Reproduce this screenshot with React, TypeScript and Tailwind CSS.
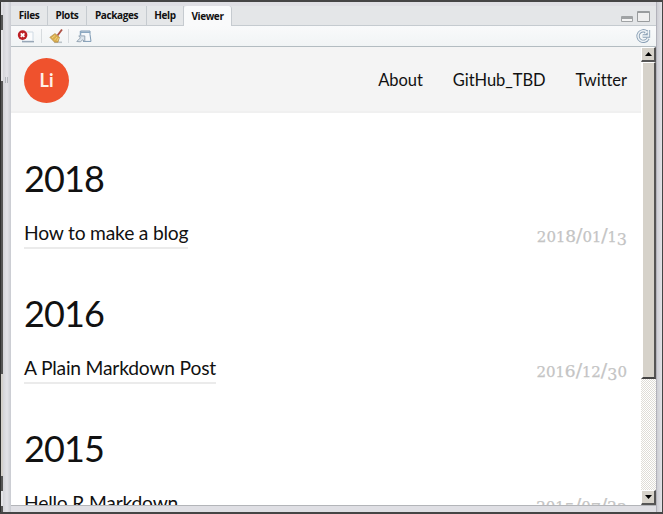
import React from "react";

const tabs = [
  { label: "Files", width: "w-[37px]" },
  { label: "Plots", width: "w-[39px]" },
  { label: "Packages", width: "w-[60px]" },
  { label: "Help", width: "w-[37px]" },
  { label: "Viewer", width: "w-[48px]" },
];

const posts = [
  { year: "2018", title: "How to make a blog", date: "2018/01/13" },
  { year: "2016", title: "A Plain Markdown Post", date: "2016/12/30" },
  { year: "2015", title: "Hello R Markdown", date: "2015/07/23" },
];

/* Old-style figures: 0-2 sit at x-height, 3/4/5/7/9 descend, 6/8 ascend. */
function figureClass(c: string) {
  if (c === "/") return "text-[19px]";
  if (c === "1") return "text-[14.5px]";
  if ("02".includes(c)) return "text-[15px]";
  if ("68".includes(c)) return "text-[17px]";
  return "relative top-[3px] text-[16px]";
}

function PostDate({ value }: { value: string }) {
  return (
    <time className="block h-[24px] whitespace-nowrap font-['DejaVu_Serif',serif] leading-[24px] text-[#c4c4c4] [-webkit-text-stroke:0.25px_#c4c4c4]">
      {value.split("").map((c, i) => (
        <span key={i} className={figureClass(c)}>{c}</span>
      ))}
    </time>
  );
}

function ScrollButton({ up = false }: { up?: boolean }) {
  return (
    <div className="flex h-[15px] w-[15px] shrink-0 items-center justify-center border-t border-l border-r-2 border-b-2 border-t-white border-l-white border-r-[#555] border-b-[#555] bg-[#d6d2ca]">
      <svg width="7" height="4" viewBox="0 0 7 4">
        <path d={up ? "M3.5 0 7 4H0Z" : "M0 0H7L3.5 4Z"} fill="#000" />
      </svg>
    </div>
  );
}

function Toolbar() {
  return (
    <div className="flex h-[21px] items-center border-b border-[#b3bcc1] bg-linear-to-b from-[#f9fafb] to-[#f1f4f5] pr-[5px] pl-[6px]">
      <svg width="18" height="16" viewBox="0 0 18 16">
        <path d="M7 4h9v9H5.5z" fill="#fbfcfd" stroke="#d0dbe4" />
        <path d="M5 13.7h12" stroke="#98a7b7" strokeWidth="1.4" />
        <circle cx="5.6" cy="7.1" r="4.8" fill="#bd1f25" />
        <path d="m3.8 5.3 3.6 3.6m0-3.6L3.8 8.9" stroke="#fff" strokeWidth="1.8" />
      </svg>
      <span className="ml-[6px] h-[14px] w-px bg-[#d7dbde]" />
      <svg className="ml-[6px]" width="17" height="16" viewBox="0 0 17 16">
        <path d="M6 14.3h8" stroke="#bcc4ca" strokeWidth="1.6" />
        <path d="M9.5 7.5 14 1.5" stroke="#ae5145" strokeWidth="1.9" />
        <path d="m7 5.5 4.5 3.8L10 14.2H6.5L1.8 9.3Z" fill="#d9ad4c" stroke="#a98544" strokeWidth=".6" />
        <path d="M7 7.5 4 10m5-1-2.5 3.2M10.5 10l-1.5 3" stroke="#f3da91" strokeWidth=".8" />
      </svg>
      <span className="ml-[3px] h-[14px] w-px bg-[#d7dbde]" />
      <svg className="ml-[6px]" width="18" height="16" viewBox="0 0 18 16">
        <path d="M5.5 3h9.5v3.5l1 6.9H8" fill="#f6f9fb" stroke="#7e9ab4" />
        <path d="M5.5 3v4.5M5.5 4.2H15" stroke="#8ba8c1" strokeWidth="1.5" />
        <path d="m1.8 13.5 3.6-3.6-1.6-2h6v5.8l-2-1.9-2.5 2Z" fill="#dce5ec" stroke="#8c9dae" strokeWidth=".9" />
      </svg>
      <svg className="ml-auto" width="16" height="16" viewBox="0 0 16 16" fill="none">
        <path d="M13.1 10.4A5.3 5.3 0 1 1 11.8 4L10 5.8M13.5 2v6H7.7" stroke="#8ba0b5" strokeWidth="3.3" />
        <path d="M13.1 10.4A5.3 5.3 0 1 1 11.8 4L10 5.8M13.5 2v6H7.7" stroke="#edf2f6" strokeWidth="1.5" />
      </svg>
    </div>
  );
}

function LeftRail() {
  return (
    <div className="flex h-[514px] w-[11px] shrink-0">
      <div className="flex w-[3px] flex-col border-l border-[#303030] bg-[#555]">
        <div className="h-[15px] bg-[#dedee2]" />
        <div className="h-[15px] bg-[#555]" />
        <div className="h-[51px] bg-[#e5e5e7]" />
        <div className="h-[293px] bg-[#555]" />
        <div className="h-[102px] bg-[#d4d1cc]" />
        <div className="h-[15px] bg-[#555]" />
        <div className="h-[15px] bg-[#e4e4e7]" />
      </div>
      <div className="flex w-[8px] items-start gap-px bg-linear-to-r from-[#d4d4d9] via-[#e3e3e8] to-[#c9cbd1] pt-[77px] pl-[2px]">
        <span className="h-[6px] w-px bg-[#b3b6bc]" />
        <span className="h-[6px] w-px bg-[#b3b6bc]" />
      </div>
    </div>
  );
}

export default function App() {
  return (
    <div className="relative flex h-[514px] w-[663px] overflow-hidden bg-[#dfdfe4] font-[Lato,sans-serif] text-[#111]">
      <LeftRail />
      <main className="flex w-[645px] shrink-0 flex-col pt-[6px]">
        <div className="flex h-[20px] shrink-0 border-b border-[#c5cbd0] bg-[#e4e6e8]">
          {tabs.map((tab) => (
            <div
              key={tab.label}
              className={`flex h-[20px] shrink-0 items-center justify-center border-r border-[#c6cbd0] font-['Open_Sans',sans-serif] text-[10px] font-bold tracking-[-0.4px] ${tab.width} ${tab.label === "Viewer" ? "rounded-t-[3px] bg-[#f9fafb]" : "border-b bg-[#e5e7e9]"}`}
            >
              {tab.label}
            </div>
          ))}
          <div className="ml-auto flex items-start gap-[4px] pt-[5px] pr-[6px]">
            <span className="mt-[5px] h-[6px] w-[12px] rounded-[1px] border border-t-3 border-[#a0a3a5] bg-[#f5f5f5]" />
            <span className="h-[11px] w-[13px] rounded-[1px] border border-t-2 border-[#999c9e] bg-[#efefef]" />
          </div>
        </div>
        <Toolbar />
        <div className="flex h-[458px] shrink-0">
          <div className="h-[458px] w-[630px] overflow-hidden bg-white">
            <header className="flex h-[66px] items-center border-b-2 border-[#f0f0f0] bg-[#f4f4f4] pt-[2px] pr-[14px] pl-[13px]">
              <div className="flex h-[45px] w-[45px] items-center justify-center rounded-full bg-[#ef522d] text-[18px] font-bold text-[#fff0e9]">Li</div>
              <nav className="ml-auto flex gap-[30px] text-[16.5px] leading-[24px] tracking-[-0.05px]">
                <a>About</a>
                <a>GitHub_TBD</a>
                <a>Twitter</a>
              </nav>
            </header>
            <div className="pt-[40px] pr-[14px] pl-[14px]">
              {posts.map((post) => (
                <section key={post.year} className="h-[135px]">
                  <h2 className="-ml-px h-[50px] text-[36px] leading-[50px] tracking-[-0.9px]">{post.year}</h2>
                  <div className="-ml-px flex items-start justify-between pt-[16px]">
                    <a className="h-[30px] border-b-2 border-[#ebebeb] text-[19.25px] leading-[28px] tracking-[-0.2px]">{post.title}</a>
                    <div className="pt-[4px]"><PostDate value={post.date} /></div>
                  </div>
                </section>
              ))}
            </div>
          </div>
          <div className="flex w-[15px] flex-col bg-[conic-gradient(#fff_25%,#dfdcd7_0_50%,#fff_0_75%,#dfdcd7_0)] bg-size-[2px_2px]">
            <ScrollButton up />
            <div className="h-[317px] border-t border-r-2 border-b-2 border-l-2 border-t-white border-r-[#555] border-b-[#444] border-l-white bg-[#d6d2ca]" />
            <div className="mt-auto"><ScrollButton /></div>
          </div>
        </div>
        <div className="h-px shrink-0 bg-[#b3b5b9]" />
      </main>
      <div className="w-[7px] border-l border-[#b2b2bb] bg-linear-to-r from-[#cdced4] to-[#e6e6eb]" />
      <div className="pointer-events-none absolute inset-0 border-t-2 border-r border-b-2 border-[#454545]" />
    </div>
  );
}
